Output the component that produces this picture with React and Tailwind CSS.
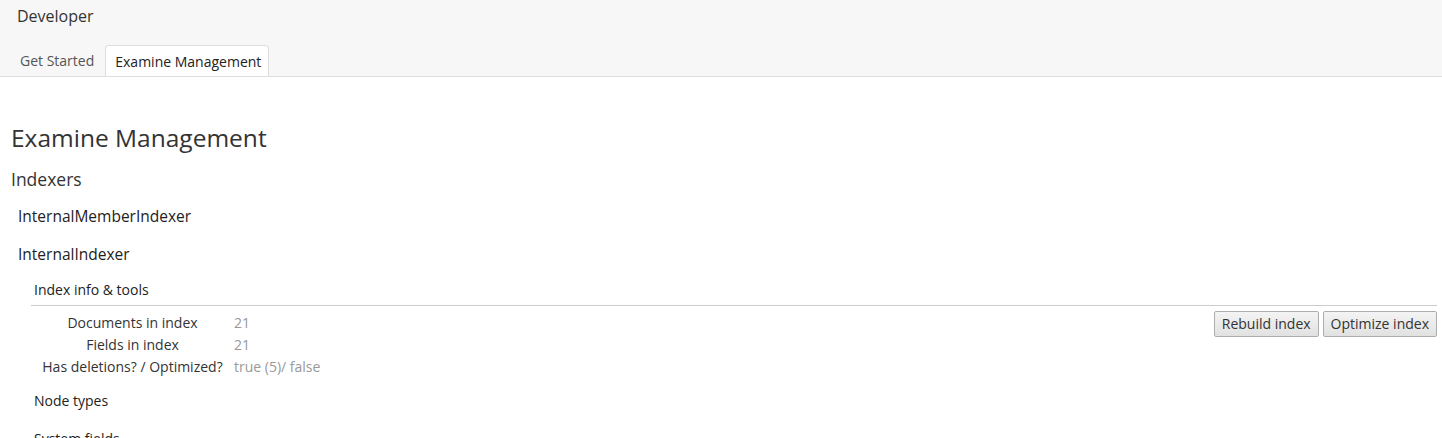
import React from "react";

function Btn({ children }) {
  return (
    <button className="h-[26px] px-[7px] text-[14px] text-[#333] border border-[#adadad] rounded-[2px] bg-gradient-to-b from-[#f4f4f4] to-[#e1e1e1] leading-none whitespace-nowrap">
      {children}
    </button>
  );
}

export default function App() {
  const rows = [
    ["Documents in index", "21"],
    ["Fields in index", "21"],
    ["Has deletions? / Optimized?", "true (5)/ false"],
  ];
  return (
    <div className="w-[1442px] h-[438px] overflow-hidden bg-white text-[#333]" style={{ fontFamily: '"Open Sans", "Noto Sans", sans-serif' }}>
      <div className="h-[77px] bg-[#f7f7f7] border-b border-[#ddd] flex flex-col">
        <div className="h-[46px] pl-[17px] pt-[4px] text-[16px] leading-[24px] text-[#333]">Developer</div>
        <div className="flex pl-[10px] gap-[1px] h-[31px]">
          <div className="px-[10px] h-[31px] flex items-center text-[14px] text-[#555]">Get Started</div>
          <div className="pl-[9px] pr-[7px] h-[31px] flex items-center text-[14px] text-[#222] bg-white border border-b-0 border-[#ddd] rounded-t-[4px]">Examine Management</div>
        </div>
      </div>
      <div className="pl-[11px] pr-[5px]">
        <h1 className="mt-[44px] text-[24.5px] leading-[34px] text-[#333]">Examine Management</h1>
        <div className="mt-[11px] text-[17.5px] leading-[26px] text-[#333]">Indexers</div>
        <div className="mt-[6px] pl-[7px]">
          <div className="h-[38px] flex items-center text-[15.5px] text-[#222]">InternalMemberIndexer</div>
          <div className="h-[38px] flex items-center text-[15.5px] text-[#222]">InternalIndexer</div>
        </div>
        <div className="ml-[20px]">
          <div className="h-[32px] flex items-center pl-[3px] text-[14px] text-[#222] border-b border-[#ccc]">Index info &amp; tools</div>
          <div className="flex justify-between pt-[5px] pb-[4px]">
            <div className="flex flex-col pl-[11px]">
              {rows.map(([k, v]) => (
                <div key={k} className="flex h-[22px] items-center text-[14px] whitespace-nowrap">
                  <div className="w-[181px] text-center text-[#333] whitespace-nowrap">{k}</div>
                  <div className="ml-[11px] text-[#999]">{v}</div>
                </div>
              ))}
            </div>
            <div className="flex gap-[4px] items-start">
              <Btn>Rebuild index</Btn>
              <Btn>Optimize index</Btn>
            </div>
          </div>
          <div className="h-[38px] flex items-center pl-[3px] text-[14px] text-[#222]">Node types</div>
          <div className="h-[38px] flex items-center pl-[3px] text-[14px] text-[#222]">System fields</div>
        </div>
      </div>
    </div>
  );
}
